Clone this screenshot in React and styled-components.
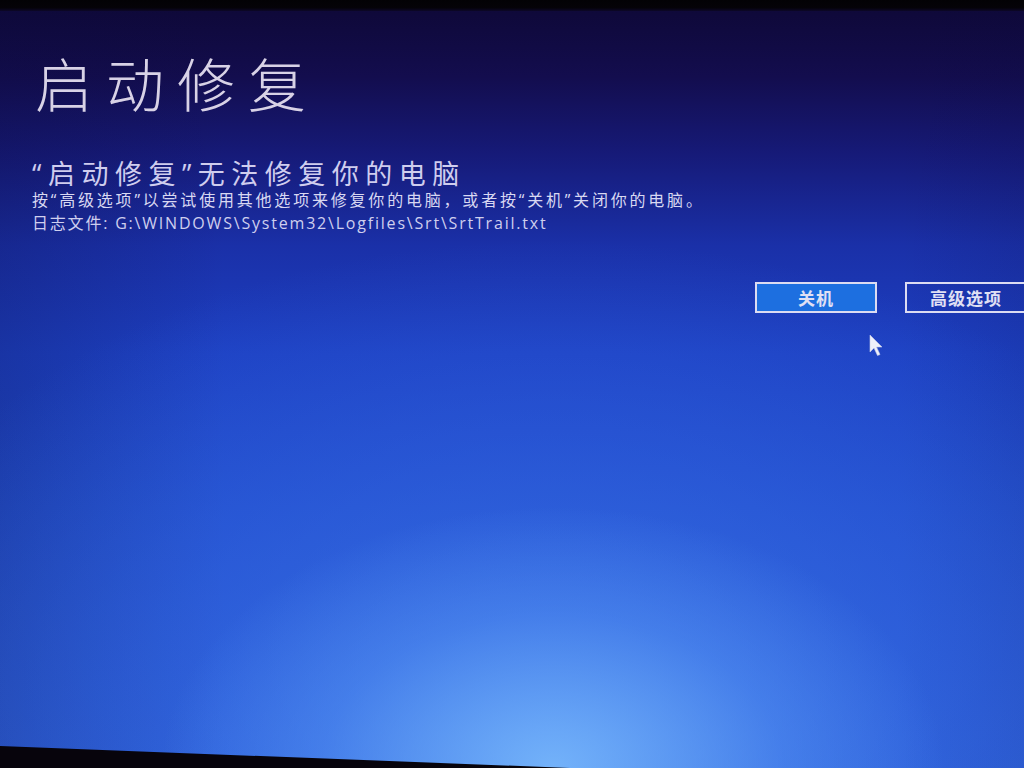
import React from 'react'
import styled, { createGlobalStyle } from 'styled-components'

const GlobalStyle = createGlobalStyle`
  html, body {
    margin: 0;
    padding: 0;
    width: 100%;
    height: 100%;
    overflow: hidden;
    background: #050308;
  }
  #root {
    height: 100%;
  }
`

const FONT = `"Open Sans", "Noto Sans CJK SC", "Noto Sans", sans-serif`

function App() {
  return (
    <>
      <GlobalStyle />
      <Screen>
        <TopBezel />
        <Content>
          <Title>启动修复</Title>
          <Heading>“启动修复”无法修复你的电脑</Heading>
          <Message>按“高级选项”以尝试使用其他选项来修复你的电脑，或者按“关机”关闭你的电脑。</Message>
          <LogPath>日志文件: G:\WINDOWS\System32\Logfiles\Srt\SrtTrail.txt</LogPath>
          <Actions>
            <ActionButton primary>关机</ActionButton>
            <ActionButton>高级选项</ActionButton>
          </Actions>
        </Content>
        <Cursor width="16" height="23" viewBox="0 0 16 23">
          <path d="M1 1 L1 18 L5 14 L8.5 21.5 L11 20.5 L7.5 13 L13 13 Z" fill="#eef0fa" stroke="#c8cce8" strokeWidth="0.6" strokeLinejoin="round" />
        </Cursor>
        <BottomBezel />
      </Screen>
    </>
  )
}

export default App

const Screen = styled.div`
  position: relative;
  width: 100%;
  height: 100%;
  overflow: hidden;
  display: flex;
  flex-direction: column;
  background-color: #1a35b5;
  background-image:
    radial-gradient(ellipse 45% 40% at 54% 100%, rgba(130, 195, 255, 0.8) 0%, rgba(95, 160, 250, 0.4) 50%, rgba(60, 120, 240, 0) 85%),
    radial-gradient(ellipse 85% 75% at 54% 95%, rgba(65, 125, 240, 0.65) 0%, rgba(55, 110, 235, 0.35) 50%, rgba(55, 110, 235, 0) 85%),
    linear-gradient(to right, rgba(10, 10, 60, 0.22) 0%, rgba(10, 10, 60, 0) 22%, rgba(10, 10, 60, 0) 88%, rgba(10, 10, 60, 0.1) 100%),
    linear-gradient(to bottom, #0e0836 0%, #130d4e 10%, #161a78 20%, #1a30a8 32%, #1d40c2 46%, #214cca 66%, #2a5ad2 100%);
`

const TopBezel = styled.div`
  height: 11px;
  flex: none;
  background: linear-gradient(to bottom, #030205 0%, #050308 70%, #0c0728 100%);
`

const Content = styled.div`
  display: flex;
  flex-direction: column;
  padding-left: 32px;
  color: #d4d2ec;
  font-family: ${FONT};
`

const Title = styled.h1`
  margin: 45px 0 0 3px;
  font-size: 58px;
  font-weight: 300;
  line-height: 1;
  letter-spacing: 13px;
  color: #d8d2e6;
`

const Heading = styled.h2`
  margin: 46px 0 0;
  font-size: 27px;
  font-weight: 400;
  line-height: 1;
  letter-spacing: 6.5px;
  color: #cfcdee;
`

const Message = styled.p`
  margin: 5px 0 0;
  font-size: 16px;
  line-height: 1;
  letter-spacing: 2.8px;
  color: #d8d8f2;
`

const LogPath = styled.p`
  margin: 7px 0 0;
  font-size: 16px;
  line-height: 1;
  letter-spacing: 1.8px;
  color: #cfcfee;
`

const Actions = styled.div`
  display: flex;
  justify-content: flex-end;
  gap: 28px;
  margin: 51px -3px 0 0;
`

const ActionButton = styled.div`
  width: 122px;
  height: 31px;
  box-sizing: border-box;
  display: flex;
  align-items: center;
  justify-content: center;
  border: 2px solid #dcdcf2;
  background: ${p => (p.primary ? '#1d6fe0' : 'transparent')};
  color: #e0e0f4;
  font-size: 17px;
  font-weight: 700;
  letter-spacing: 1px;
`

const Cursor = styled.svg`
  position: absolute;
  left: 869px;
  top: 334px;
`

const BottomBezel = styled.div`
  position: absolute;
  left: 0;
  bottom: 0;
  width: 570px;
  height: 22px;
  background: #07040c;
  clip-path: polygon(0 0, 100% 100%, 0 100%);
`
